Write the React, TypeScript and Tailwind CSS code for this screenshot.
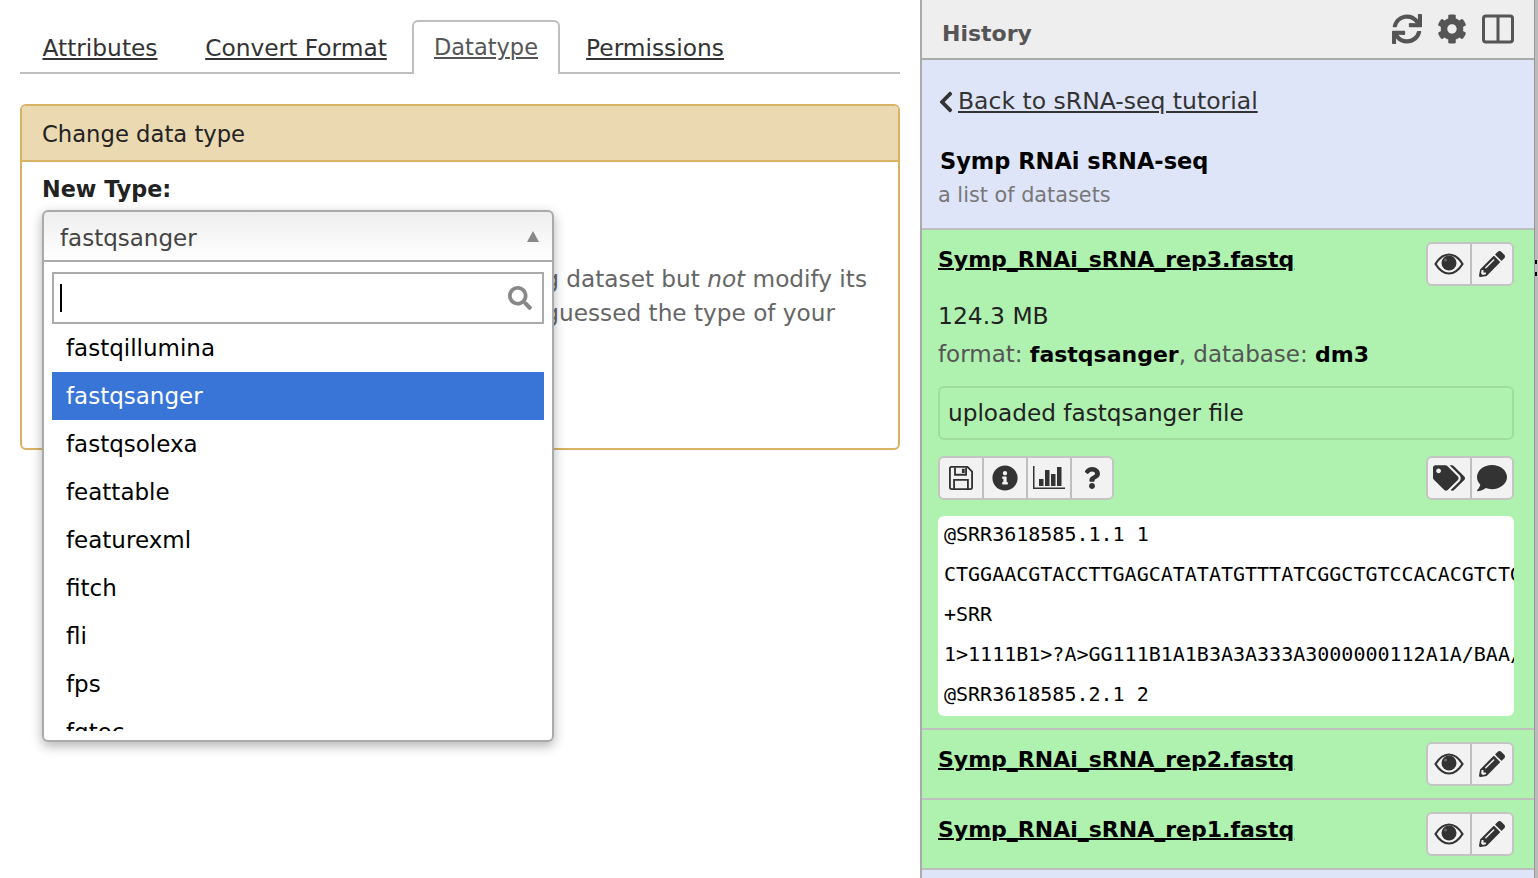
import React from 'react';
import {
  FaChevronLeft,
  FaCog,
  FaComment,
  FaInfoCircle,
  FaPencilAlt,
  FaQuestion,
  FaSearch,
  FaSync,
  FaTags,
} from 'react-icons/fa';

const font = "font-['DejaVu_Sans',sans-serif]";

const tabs = [
  { label: 'Attributes', width: 'w-[160px]' },
  { label: 'Convert Format', width: 'w-[224px]' },
  { label: 'Datatype', width: 'w-[148px]' },
  { label: 'Permissions', width: 'w-[182px]' },
];
const options = ['fastqillumina', 'fastqsanger', 'fastqsolexa', 'feattable', 'featurexml', 'fitch', 'fli', 'fps', 'fqtoc'];
const peek = [
  '@SRR3618585.1.1 1',
  'CTGGAACGTACCTTGAGCATATATGTTTATCGGCTGTCCACACGTCTGAACTCCAGTCACATC',
  '+SRR',
  '1>1111B1>?A>GG111B1A1B3A3A333A3000000112A1A/BAA/AAGFFHHHHHH',
  '@SRR3618585.2.1 2',
];

const IconButton: React.FC<{ children: React.ReactNode; last?: boolean }> = ({ children, last }) => (
  <span
    className={`flex h-10 items-center justify-center bg-[#f2f2f2] text-[#333] ${
      last ? 'w-10' : 'w-11 border-r-2 border-[#bfbfbf]'
    }`}
  >
    {children}
  </span>
);

const ButtonGroup: React.FC<{ children: React.ReactNode }> = ({ children }) => (
  <div className="flex overflow-hidden rounded-md border-2 border-[#c4c4c4]">{children}</div>
);

const EyeIcon = () => (
  <svg viewBox="0 0 30 24" className="h-6 w-[30px]">
    <path d="M1.5 12C5.5 5.5 10 2.5 15 2.5S24.5 5.5 28.5 12C24.5 18.5 20 21.5 15 21.5S5.5 18.5 1.5 12z" fill="none" stroke="currentColor" strokeWidth="2.2" />
    <circle cx="15" cy="11" r="7.5" fill="currentColor" />
    <circle cx="11.5" cy="8" r="1.6" fill="#666" />
  </svg>
);

const SaveIcon = () => (
  <svg viewBox="0 0 26 26" className="h-6 w-6" fill="none" stroke="currentColor" strokeWidth="2">
    <path d="M2 1h18l5 5v17a2 2 0 0 1-2 2H3a2 2 0 0 1-2-2V2z" />
    <path d="M6.5 1.5v8h12v-8M5.5 25v-10h15v10" />
    <path d="M14 3h3v4.5h-3z" fill="currentColor" stroke="none" />
  </svg>
);

const BarsIcon = () => (
  <svg viewBox="0 0 32 24" className="h-6 w-8" fill="currentColor">
    <path d="M0 0h1.5v21.5H32V23H0z" />
    <path d="M6 13h4.5v7H6zM12 4h4.5v16H12zM18 8h4.5v12H18zM24 1h4.5v19H24z" />
  </svg>
);

const DatasetTitle: React.FC<{ name: string }> = ({ name }) => (
  <div className="flex items-start justify-between">
    <a className="mt-[2px] text-[22px] leading-8 font-bold text-black underline decoration-2">{name}</a>
    <ButtonGroup>
      <IconButton><EyeIcon /></IconButton>
      <IconButton last><FaPencilAlt className="h-[26px] w-[26px]" /></IconButton>
    </ButtonGroup>
  </div>
);

export default function App() {
  return (
    <div className={`flex h-[878px] w-[1538px] overflow-hidden bg-white ${font}`}>
      <main className="w-[920px] shrink-0 px-5 pt-5">
        <ul className="flex h-[54px] gap-1 border-b-2 border-[#bfbfbf] text-[23.3px]">
          {tabs.map((tab) => (
            <li
              key={tab.label}
              className={
                tab.label === 'Datatype'
                  ? `h-[54px] rounded-t-md border-2 border-b-0 border-[#bfbfbf] bg-white pt-[9px] text-center text-[22.5px] text-[#555] underline ${tab.width}`
                  : `h-[54px] pt-[11px] text-center text-[#333] underline ${tab.width}`
              }
            >
              {tab.label}
            </li>
          ))}
        </ul>

        <section className="relative mt-[30px] h-[346px] rounded-md border-2 border-[#d8b365]">
          <h2 className="flex h-14 items-center rounded-t border-b-2 border-[#d8b365] bg-[#ebd9b2] px-5 pt-0.5 text-[22.7px] text-[#222]">
            Change data type
          </h2>
          <div className="px-5">
            <label className="mt-[11px] block text-[22.3px] leading-8 font-bold text-[#222]">New Type:</label>
            <div className="mt-[57px] text-right text-[23.2px] leading-[34px] whitespace-nowrap text-[#666]">
              <p className="pr-[11px]">
                This will change the datatype of the existing dataset but <em>not</em> modify its
              </p>
              <p className="pr-[43px]">if Galaxy has incorrectly guessed the type of your</p>
            </div>
          </div>

          {/* open select2 dropdown sits over the help text */}
          <div className="absolute top-[104px] left-5 w-[512px] rounded-md shadow-[0_4px_12px_rgba(0,0,0,0.3)]">
            <div className="flex h-[52px] items-center justify-between rounded-t-md border-2 border-[#aaa] bg-gradient-to-b from-[#eee] to-white px-4 pt-1 text-[23px] text-[#444]">
              fastqsanger
              <span className="-mt-1 -mr-[3px] h-0 w-0 border-x-[6px] border-b-[11px] border-x-transparent border-b-[#888]" />
            </div>
            <div className="h-[480px] rounded-b-md border-2 border-t-0 border-[#aaa] bg-white px-2 pt-2.5">
              <div className="flex h-[52px] items-center justify-between border-2 border-[#aaa] pr-2.5 pl-1.5">
                <span className="h-7 w-0.5 bg-black" />
                <FaSearch className="h-6 w-6 text-[#888]" />
              </div>
              <ul className="h-[407px] overflow-hidden text-[23px] text-black">
                {options.map((option) => (
                  <li
                    key={option}
                    className={`flex h-12 items-center px-3.5 ${option === 'fastqsanger' ? 'bg-[#3875d7] text-white' : ''}`}
                  >
                    {option}
                  </li>
                ))}
              </ul>
            </div>
          </div>
        </section>
      </main>

      <aside className="h-full w-[614px] shrink-0 border-l-2 border-[#aaa] bg-[#dfe5f9]">
        <header className="flex h-[60px] items-center justify-between border-b-2 border-[#aaa] bg-[#eee] pr-5 pl-5 text-[#555]">
          <h1 className="mt-2 text-[22px] font-bold">History</h1>
          <div className="flex items-center gap-[15px]">
            <FaSync className="h-[30px] w-[30px]" />
            <FaCog className="h-[30px] w-[30px]" />
            <svg viewBox="0 0 32 32" className="h-8 w-8" fill="none" stroke="currentColor" strokeWidth="3">
              <rect x="1.5" y="3" width="29" height="26" rx="2.5" />
              <path d="M16 3v26" />
            </svg>
          </div>
        </header>

        <div className="h-[170px] border-b-2 border-[#bfbfbf] px-4 pt-[26px]">
          <div className="flex h-8 items-center text-[23.5px] text-[#333]">
            <FaChevronLeft className="mr-1 h-6 w-[16px]" />
            <a className="underline">Back to sRNA-seq tutorial</a>
          </div>
          <h3 className="mt-[27px] ml-0.5 text-[22.5px] leading-8 font-bold text-black">Symp RNAi sRNA-seq</h3>
          <p className="mt-px text-[20.8px] leading-[34px] text-[#777]">a list of datasets</p>
        </div>

        <article className="h-[500px] border-b-2 border-[#bfbfbf] bg-[#aff1af] py-3 pr-5 pl-4">
          <DatasetTitle name="Symp_RNAi_sRNA_rep3.fastq" />
          <p className="mt-[11px] text-[23.4px] leading-[38px] text-[#222]">124.3 MB</p>
          <p className="text-[23px] leading-[38px] text-[#555]">
            format: <b className="text-[22px] text-black">fastqsanger</b>, database: <b className="text-[22px] text-black">dm3</b>
          </p>
          <div className="mt-[12px] flex h-[54px] items-center rounded-md border-2 border-[#9fdd9f] px-2 text-[23.2px] text-[#222]">
            uploaded fastqsanger file
          </div>
          <div className="mt-[16px] flex justify-between">
            <ButtonGroup>
              <IconButton><SaveIcon /></IconButton>
              <IconButton><FaInfoCircle className="h-[26px] w-[26px]" /></IconButton>
              <IconButton><BarsIcon /></IconButton>
              <IconButton last><FaQuestion className="h-[22px] w-[22px]" /></IconButton>
            </ButtonGroup>
            <ButtonGroup>
              <IconButton><FaTags className="h-8 w-8" /></IconButton>
              <IconButton last><FaComment className="h-[30px] w-[30px]" /></IconButton>
            </ButtonGroup>
          </div>
          <pre className="mt-4 h-[200px] overflow-hidden rounded-md bg-white pl-1.5 font-['DejaVu_Sans_Mono',monospace] text-[20px] leading-10 text-black">
            <div className="-mt-0.5">{peek.join('\n')}</div>
          </pre>
        </article>

        <article className="h-[70px] border-b-2 border-[#bfbfbf] bg-[#aff1af] py-3 pr-5 pl-4">
          <DatasetTitle name="Symp_RNAi_sRNA_rep2.fastq" />
        </article>
        <article className="h-[70px] border-b-2 border-[#bfbfbf] bg-[#aff1af] py-3 pr-5 pl-4">
          <DatasetTitle name="Symp_RNAi_sRNA_rep1.fastq" />
        </article>
      </aside>

      {/* scrollbar sliver at the window edge, with the two grip dots */}
      <div className="flex flex-1 flex-col gap-2 border-l border-[#999] bg-[#bbb] pt-[260px]">
        <span className="h-1 w-[2px] bg-black" />
        <span className="h-1 w-[2px] bg-black" />
      </div>
    </div>
  );
}
